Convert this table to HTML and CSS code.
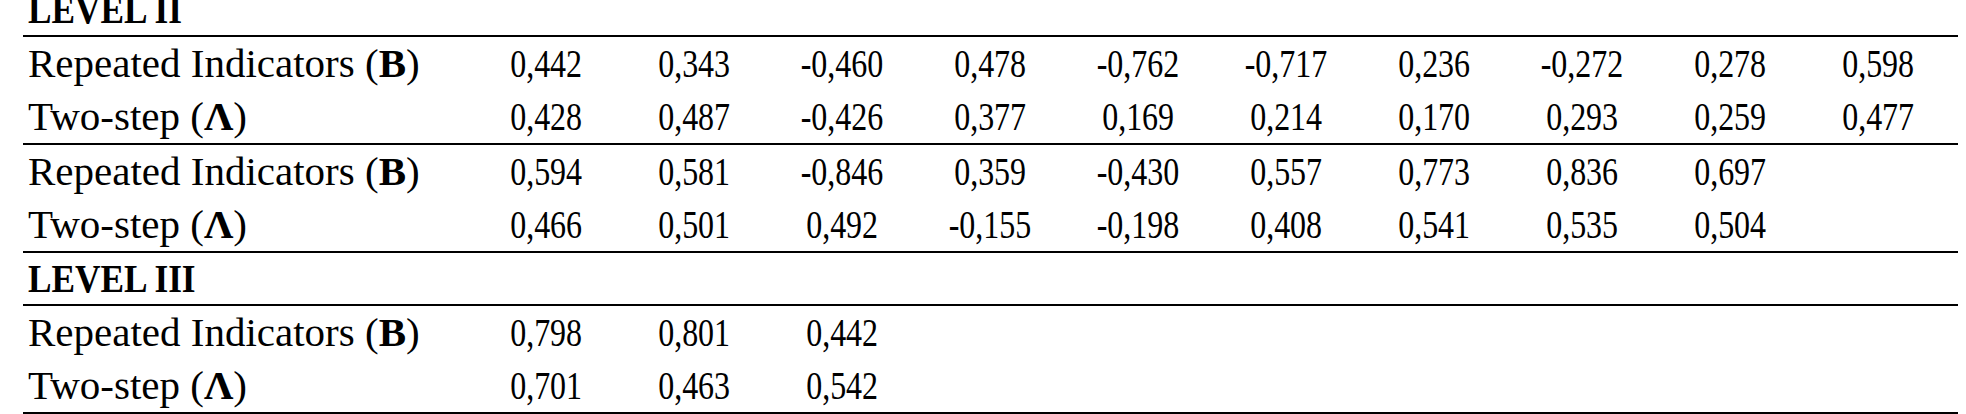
FILE: index.html
```html
<!DOCTYPE html>
<html lang="en">
<head>
  <meta charset="UTF-8">
  <meta name="viewport" content="width=device-width, initial-scale=1.0">
  <title>Loadings by level</title>
  <link rel="stylesheet" href="styles.css">
</head>
<body>
  <table class="loadings">
    <colgroup>
      <col class="label-col">
      <col class="num-col" span="9">
      <col class="last-col">
    </colgroup>
    <tbody>
      <tr class="level">
        <th colspan="11"><span class="level-name">LEVEL II</span></th>
      </tr>
      <tr>
        <td class="label">Repeated Indicators (<b>B</b>)</td>
        <td><span>0,442</span></td>
        <td><span>0,343</span></td>
        <td><span>-0,460</span></td>
        <td><span>0,478</span></td>
        <td><span>-0,762</span></td>
        <td><span>-0,717</span></td>
        <td><span>0,236</span></td>
        <td><span>-0,272</span></td>
        <td><span>0,278</span></td>
        <td><span>0,598</span></td>
      </tr>
      <tr class="group-end">
        <td class="label">Two-step (<b>Λ</b>)</td>
        <td><span>0,428</span></td>
        <td><span>0,487</span></td>
        <td><span>-0,426</span></td>
        <td><span>0,377</span></td>
        <td><span>0,169</span></td>
        <td><span>0,214</span></td>
        <td><span>0,170</span></td>
        <td><span>0,293</span></td>
        <td><span>0,259</span></td>
        <td><span>0,477</span></td>
      </tr>
      <tr>
        <td class="label">Repeated Indicators (<b>B</b>)</td>
        <td><span>0,594</span></td>
        <td><span>0,581</span></td>
        <td><span>-0,846</span></td>
        <td><span>0,359</span></td>
        <td><span>-0,430</span></td>
        <td><span>0,557</span></td>
        <td><span>0,773</span></td>
        <td><span>0,836</span></td>
        <td><span>0,697</span></td>
        <td></td>
      </tr>
      <tr class="group-end">
        <td class="label">Two-step (<b>Λ</b>)</td>
        <td><span>0,466</span></td>
        <td><span>0,501</span></td>
        <td><span>0,492</span></td>
        <td><span>-0,155</span></td>
        <td><span>-0,198</span></td>
        <td><span>0,408</span></td>
        <td><span>0,541</span></td>
        <td><span>0,535</span></td>
        <td><span>0,504</span></td>
        <td></td>
      </tr>
      <tr class="level">
        <th colspan="11"><span class="level-name">LEVEL III</span></th>
      </tr>
      <tr>
        <td class="label">Repeated Indicators (<b>B</b>)</td>
        <td><span>0,798</span></td>
        <td><span>0,801</span></td>
        <td><span>0,442</span></td>
        <td></td><td></td><td></td><td></td><td></td><td></td><td></td>
      </tr>
      <tr class="group-end">
        <td class="label">Two-step (<b>Λ</b>)</td>
        <td><span>0,701</span></td>
        <td><span>0,463</span></td>
        <td><span>0,542</span></td>
        <td></td><td></td><td></td><td></td><td></td><td></td><td></td>
      </tr>
    </tbody>
  </table>
</body>
</html>
```

FILE: styles.css
```css
body {
  margin: 0;
  background-color: #ffffff;
  color: #000000;
  font-family: "Liberation Serif", "Times New Roman", serif;
  overflow: hidden;
}

.loadings {
  margin: -16px 0 0 23px;
  width: 1935px;
  table-layout: fixed;
  border-collapse: collapse;
  font-size: 41px;
}

.label-col {
  width: 449px;
}

.num-col {
  width: 148px;
}

.last-col {
  width: 154px;
}

.loadings td,
.loadings th {
  padding: 0;
  line-height: 53px;
  white-space: nowrap;
  text-align: center;
}

.loadings td.label {
  padding-left: 5px;
  text-align: left;
}

.loadings td:last-child {
  padding-right: 6px;
}

/* numbers in the source are set in a narrowed face */
.loadings td span {
  display: inline-block;
  transform: scaleX(0.78);
}

.level th {
  line-height: 51px;
  padding-left: 5px;
  text-align: left;
  border-bottom: 2px solid #000000;
}

.level-name {
  display: inline-block;
  transform: scaleX(0.86);
  transform-origin: left center;
}

.group-end td {
  border-bottom: 2px solid #000000;
}
```
